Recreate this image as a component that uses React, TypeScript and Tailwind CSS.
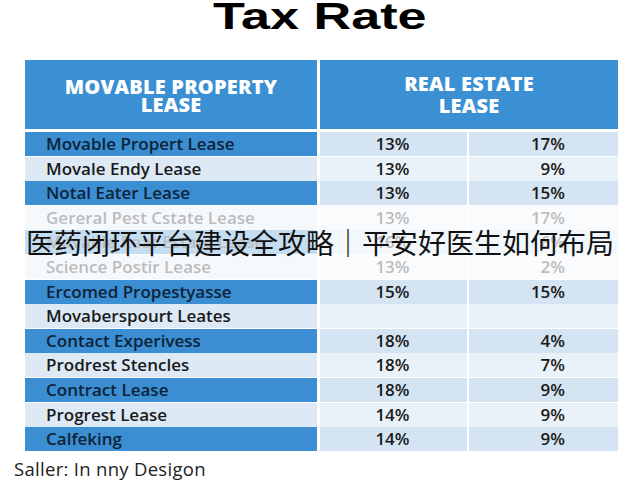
import React from 'react';

type Row = { label: string; a: string; b: string };

const rows: Row[] = [
  { label: 'Movable Propert Lease', a: '13%', b: '17%' },
  { label: 'Movale Endy Lease', a: '13%', b: '9%' },
  { label: 'Notal Eater Lease', a: '13%', b: '15%' },
  { label: 'Gereral Pest Cstate Lease', a: '13%', b: '17%' },
  { label: 'Movable Reat Estate Lease', a: '16%', b: '6%' },
  { label: 'Science Postir Lease', a: '13%', b: '2%' },
  { label: 'Ercomed Propestyasse', a: '15%', b: '15%' },
  { label: 'Movaberspourt Leates', a: '', b: '' },
  { label: 'Contact Experivess', a: '18%', b: '4%' },
  { label: 'Prodrest Stencles', a: '18%', b: '7%' },
  { label: 'Contract Lease', a: '18%', b: '9%' },
  { label: 'Progrest Lease', a: '14%', b: '9%' },
  { label: 'Calfeking', a: '14%', b: '9%' }
];

const App: React.FC = () => {
  return (
    <div className="relative h-[480px] w-[640px] overflow-hidden bg-white font-['Open_Sans',sans-serif]">
      <div className="flex h-[60px] justify-center">
        <h1 className="inline-block h-[34px] scale-x-[1.41] font-['Liberation_Sans',sans-serif] text-[37px] font-bold leading-[34px] text-black">
          Tax Rate
        </h1>
      </div>

      <div className="ml-[25px] w-[593px]">
        <div className="grid h-[69px] grid-cols-[292px_298px] gap-[3px] text-[20px] font-extrabold uppercase tracking-[0.2px] text-white">
          <div className="flex flex-col items-center justify-center bg-[#3b90d3] pt-[2px] leading-[18px]">
            <span>Movable Property</span>
            <span>Lease</span>
          </div>
          <div className="flex flex-col items-center justify-center bg-[#3b90d3] leading-[22px]">
            <span>Real Estate</span>
            <span>Lease</span>
          </div>
        </div>

        <div className="mt-[3px] flex flex-col">
          {rows.map((row, i) => {
            const dark = i % 2 === 0;
            return (
              <div key={i} className="grid h-[24.6px] grid-cols-[292px_147px_149px] gap-x-[2.5px] border-b border-white/60 text-[17px] font-semibold leading-[24px]">
                <div className={dark ? 'bg-[#3a8ed1] pl-[21px] text-[#0e2238]' : 'bg-[#dde9f5] pl-[21px] text-[#1a1a1a]'}>{row.label}</div>
                <div className={dark ? 'bg-[#d4e4f2] pr-[57px] text-right text-[#1a1a1a]' : 'bg-[#eaf2f9] pr-[57px] text-right text-[#1a1a1a]'}>{row.a}</div>
                <div className={dark ? 'bg-[#d4e4f2] pr-[53px] text-right text-[#1a1a1a]' : 'bg-[#eaf2f9] pr-[53px] text-right text-[#1a1a1a]'}>{row.b}</div>
              </div>
            );
          })}
        </div>
      </div>

      {/* faded band with the caption over it */}
      <div className="absolute left-0 top-[206px] h-[74px] w-full bg-white/70" />
      <div className="absolute left-0 top-[227px] flex h-[30px] w-full items-center justify-center font-['Noto_Sans_CJK_SC',sans-serif] text-[28px] leading-[30px] text-[#111]">
        医药闭环平台建设全攻略｜平安好医生如何布局
      </div>

      <div className="pl-[14px] pt-[7px] text-[18.5px] leading-[20px] tracking-[0.3px] text-[#222]">Saller: In nny Desigon</div>
    </div>
  );
};

export default App;
